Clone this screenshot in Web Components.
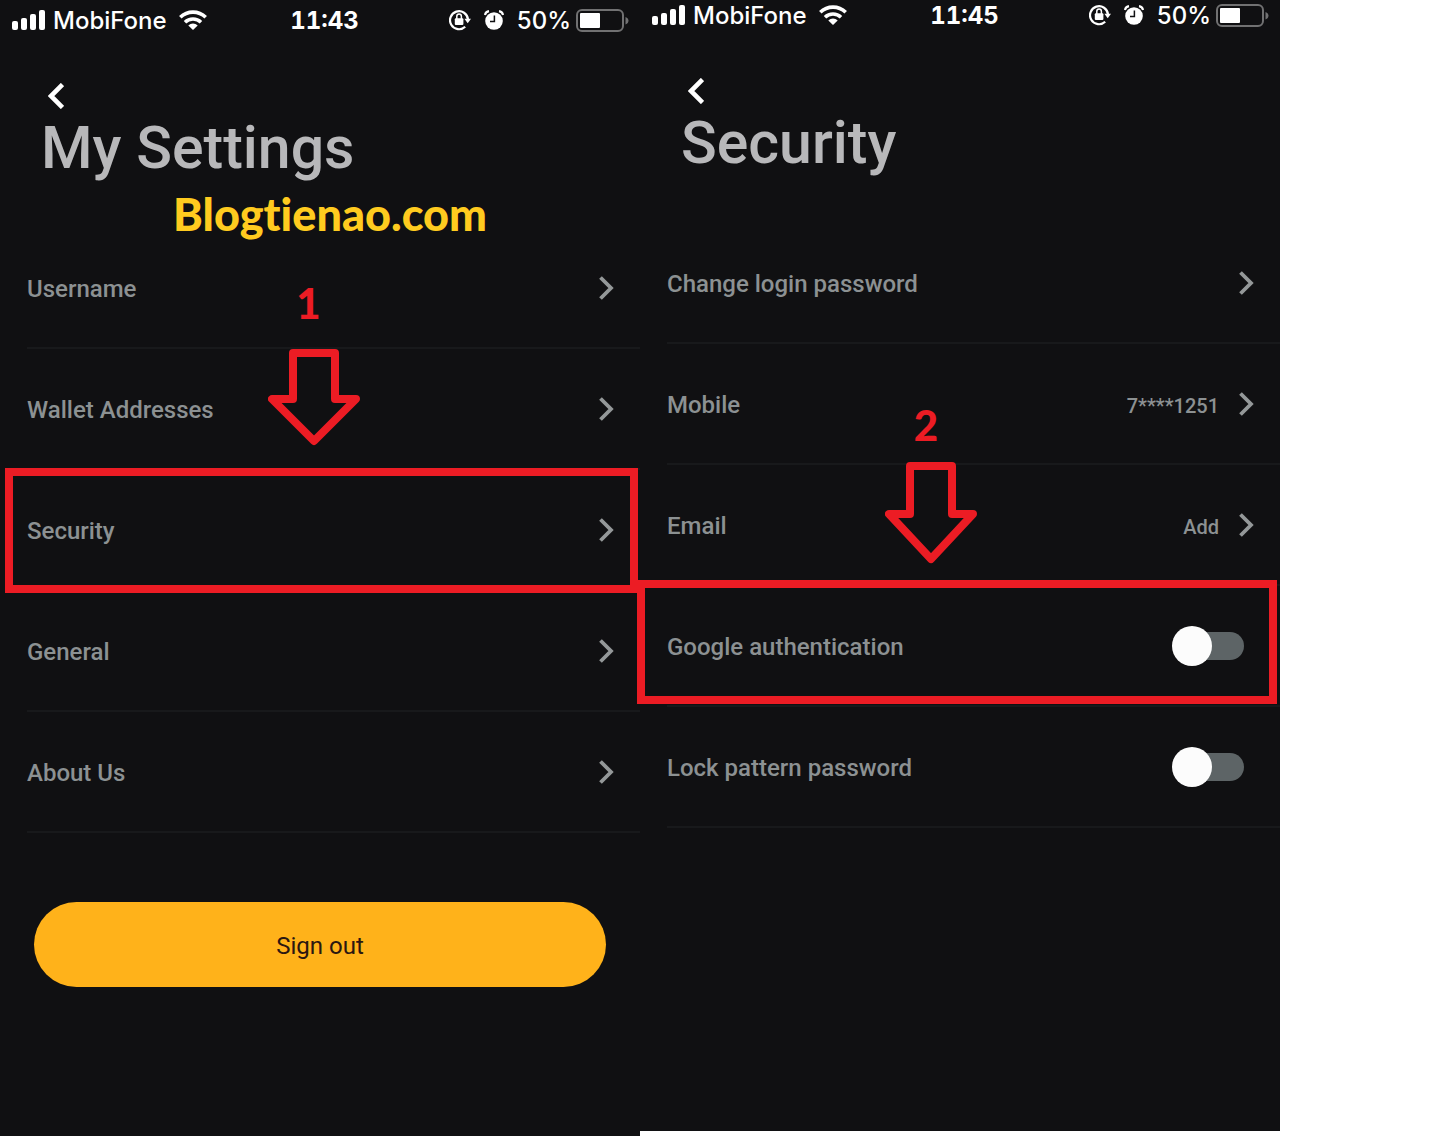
<!DOCTYPE html>
<html lang="en">
<head>
  <meta charset="utf-8">
  <meta name="viewport" content="width=device-width, initial-scale=1">
  <title>My Settings</title>
  <style>
    body {
      background-color: white;
      display: grid;
      font-family: Roboto, "Liberation Sans", sans-serif;
      grid-template-columns: 128fr 128fr 31fr;
      margin: 0;
      min-height: 100vh;
    }

    /* The second phone sits a little higher than the first */
    #security {
      --top-inset: 0px;
      margin-bottom: 5px;
    }

    .watermark {
      color: #ffcb1f;
      font: 900 45px/50px Lato, "Open Sans", sans-serif;
      font-variant-ligatures: none;
      margin: 0;
      padding-left: 20px;
      text-align: center;
    }

    #step-one {
      --frame-inset: -2px 2px -2px 5px;
      --arrow-shift: -8px;
      --arrow-gap: 21px;
      --number-gap: 21px;
    }

    #step-two {
      --frame-inset: -6px 3px 3px -3px;
      --arrow-shift: -26px;
      --arrow-gap: 15px;
      --number-gap: 12px;
    }
  </style>
</head>
<body>
  <phone-screen id="settings" heading="My Settings" time="11:43">
    <p class="watermark" slot="banner">Blogtienao.com</p>
    <setting-row>Username</setting-row>
    <setting-row>Wallet Addresses</setting-row>
    <setting-row>Security
      <step-marker id="step-one" slot="marker" number="1" shaft="50" tip="92"></step-marker>
    </setting-row>
    <setting-row>General</setting-row>
    <setting-row>About Us</setting-row>
    <pill-button>Sign out</pill-button>
  </phone-screen>

  <phone-screen id="security" heading="Security" time="11:45">
    <setting-row>Change login password</setting-row>
    <setting-row value="7****1251">Mobile</setting-row>
    <setting-row value="Add">Email</setting-row>
    <toggle-row>Google authentication
      <step-marker id="step-two" slot="marker" number="2" shaft="52" tip="97"></step-marker>
    </toggle-row>
    <toggle-row>Lock pattern password</toggle-row>
  </phone-screen>

  <script>
    // Attaches an open shadow root and fills it with the given markup
    function render(element, markup) {
      element.attachShadow({ mode: 'open' }).innerHTML = markup;
    }

    class StatusBar extends HTMLElement {
      connectedCallback() {
        render(this, `
          <style>
            :host {
              align-items: center;
              box-sizing: border-box;
              color: white;
              display: grid;
              font: 500 24px/28px Inter, "Liberation Sans", sans-serif;
              grid-template-columns: 1fr auto 1fr;
              height: 30px;
              padding: 0 11px 0 12px;
            }

            div {
              align-items: center;
              display: flex;
            }

            svg {
              display: block;
              flex: none;
            }

            span,
            time { padding-top: 2px; }

            .carrier { gap: 8px; }
            .wifi { margin-left: 4px; }

            time {
              font-variant-numeric: tabular-nums;
              font-weight: 700;
              margin-left: 8px;
            }

            .system {
              gap: 13px;
              justify-content: flex-end;
            }

            .power { gap: 5px; }
          </style>
          <div class="carrier">
            <svg width="33" height="20" viewBox="0 0 33 20" fill="white" aria-hidden="true">
              <rect x="0" y="11" width="6" height="9" rx="2"/>
              <rect x="9" y="8" width="6" height="12" rx="2"/>
              <rect x="18" y="4" width="6" height="16" rx="2"/>
              <rect x="27" y="0" width="6" height="20" rx="2"/>
            </svg>
            <span>MobiFone</span>
            <svg class="wifi" width="28" height="20" viewBox="0 0 28 20" aria-hidden="true">
              <g fill="none" stroke="white" stroke-width="3.6">
                <path d="M1.3 7.2a18.4 18.4 0 0 1 25.4 0"/>
                <path d="M6 12.2a11.6 11.6 0 0 1 16 0"/>
              </g>
              <path d="M9.3 15.4a7 7 0 0 1 9.4 0L14 20z" fill="white"/>
            </svg>
          </div>
          <time>${this.getAttribute('time')}</time>
          <div class="system">
            <svg width="22" height="22" viewBox="0 0 22 22" aria-hidden="true">
              <path d="M16.2 17.8A9 9 0 1 1 19 10.5" fill="none" stroke="white" stroke-width="2.2"/>
              <path d="M15.4 9.8h6.6l-3.3 4.4z" fill="white"/>
              <rect x="5.8" y="9.3" width="8.6" height="6.7" rx="1" fill="white"/>
              <path d="M7.8 10V7.4a2.3 2.3 0 0 1 4.6 0V10" fill="none" stroke="white" stroke-width="1.5"/>
            </svg>
            <svg width="20" height="20" viewBox="0 0 20 20" aria-hidden="true">
              <circle cx="10" cy="11" r="8.8" fill="white"/>
              <path d="M.9 5A5 5 0 0 1 5 1.2M19.1 5A5 5 0 0 0 15 1.2" fill="none" stroke="white" stroke-width="2.2"/>
              <path d="M10.4 5.5v6H6" fill="none" stroke="#101012" stroke-width="1.5"/>
            </svg>
            <div class="power">
              <span>50%</span>
              <svg width="53" height="24" viewBox="0 0 53 24" aria-hidden="true">
                <rect x="1" y="2" width="46" height="21" rx="5" fill="none" stroke="#717172" stroke-width="2"/>
                <rect x="4" y="5" width="20" height="15" rx="1" fill="white"/>
                <path d="M49.5 9c4 1.5 4 6 0 7.5z" fill="#717172"/>
              </svg>
            </div>
          </div>
        `);
      }
    }

    class PhoneScreen extends HTMLElement {
      connectedCallback() {
        render(this, `
          <style>
            :host {
              background-color: #101012;
              box-sizing: border-box;
              display: block;
              min-width: 0;
              padding-top: var(--top-inset, 5px);
            }

            header {
              box-sizing: border-box;
              height: 193px;
              padding-top: 44px;
            }

            button {
              background: none;
              border: none;
              cursor: pointer;
              display: block;
              margin-left: 44px;
              padding: 4px;
            }

            button svg { display: block; }

            h1 {
              color: #b8b8ba;
              font-size: 59px;
              font-weight: 500;
              line-height: 70px;
              margin: 0 0 6px 41px;
            }
          </style>
          <status-bar time="${this.getAttribute('time')}"></status-bar>
          <header>
            <button type="button" aria-label="Back">
              <svg width="16" height="26" viewBox="0 0 16 26">
                <path d="M14.5 1.5L3 13l11.5 11.5" fill="none" stroke="white" stroke-width="4.6"/>
              </svg>
            </button>
            <h1>${this.getAttribute('heading')}</h1>
            <slot name="banner"></slot>
          </header>
          <main><slot></slot></main>
        `);
      }
    }

    // Shared by the link rows and the toggle rows
    const rowStyles = `
      :host {
        display: block;
        position: relative;
      }

      .row {
        align-items: center;
        border-bottom: 2px solid #18191b;
        box-sizing: border-box;
        color: #8c9192;
        cursor: pointer;
        display: flex;
        font-size: 24px;
        font-weight: 500;
        height: 121px;
        line-height: 32px;
        margin-left: 27px;
        padding-right: 26px;
        text-decoration: none;
      }

      .label {
        flex: 1;
        padding-top: 2px;
      }
    `;

    class SettingRow extends HTMLElement {
      connectedCallback() {
        const value = this.getAttribute('value');
        render(this, `
          <style>
            ${rowStyles}
            .value {
              font-size: 20px;
              margin-right: 19px;
              padding-top: 4px;
            }
          </style>
          <a class="row" href="#">
            <span class="label"><slot></slot></span>
            ${value ? `<span class="value">${value}</span>` : ''}
            <svg width="16" height="24" viewBox="0 0 16 24" aria-hidden="true">
              <path d="M2.5 1.5L13 12L2.5 22.5" fill="none" stroke="#949899" stroke-width="3.8"/>
            </svg>
          </a>
          <slot name="marker"></slot>
        `);
      }
    }

    class ToggleRow extends HTMLElement {
      connectedCallback() {
        render(this, `
          <style>
            ${rowStyles}
            .row { padding-right: 36px; }

            /* ::before is the track, ::after the knob that lies over it */
            input {
              align-items: center;
              appearance: none;
              cursor: pointer;
              display: grid;
              height: 40px;
              margin: 0;
              width: 72px;
            }

            input::before,
            input::after {
              content: '';
              grid-area: 1 / 1;
            }

            input::before {
              background-color: #5d6466;
              border-radius: 14px;
              height: 28px;
              margin-left: 8px;
            }

            input::after {
              background-color: #fcfcfc;
              border-radius: 50%;
              height: 40px;
              width: 40px;
            }

            input:checked::after { justify-self: end; }
          </style>
          <label class="row">
            <span class="label"><slot></slot></span>
            <input type="checkbox" role="switch">
          </label>
          <slot name="marker"></slot>
        `);
      }
    }

    // Red frame round a row, with a numbered arrow that points down at it
    class StepMarker extends HTMLElement {
      connectedCallback() {
        const shaft = Number(this.getAttribute('shaft'));
        const tip = Number(this.getAttribute('tip'));
        render(this, `
          <style>
            :host {
              border: 8px solid #ec1c24;
              inset: var(--frame-inset);
              pointer-events: none;
              position: absolute;
              z-index: 1;
            }

            .callout {
              align-items: center;
              bottom: calc(100% + 8px + var(--arrow-gap));
              color: #ec1c24;
              display: flex;
              flex-direction: column;
              font: 900 42px/50px Lato, "Open Sans", sans-serif;
              gap: var(--number-gap);
              left: calc(50% + var(--arrow-shift));
              margin-left: -46px;
              position: absolute;
              width: 92px;
            }

            span { padding-right: 10px; }
            svg { display: block; }
          </style>
          <div class="callout">
            <span>${this.getAttribute('number')}</span>
            <svg width="92" height="${tip + 6}" aria-hidden="true">
              <path d="M25 4H67V${shaft}H88L46 ${tip}L4 ${shaft}H25Z" fill="none"
                stroke="#ec1c24" stroke-width="8" stroke-linejoin="round"/>
            </svg>
          </div>
        `);
      }
    }

    class PillButton extends HTMLElement {
      connectedCallback() {
        render(this, `
          <style>
            :host {
              display: block;
              padding: 69px 34px 0;
            }

            button {
              background-color: #ffb21a;
              border: none;
              border-radius: 43px;
              color: #2b1711;
              cursor: pointer;
              font: 24px/32px Roboto, "Liberation Sans", sans-serif;
              height: 85px;
              padding: 2px 0 0;
              width: 100%;
            }
          </style>
          <button type="button"><slot></slot></button>
        `);
      }
    }

    customElements.define('status-bar', StatusBar);
    customElements.define('phone-screen', PhoneScreen);
    customElements.define('setting-row', SettingRow);
    customElements.define('toggle-row', ToggleRow);
    customElements.define('step-marker', StepMarker);
    customElements.define('pill-button', PillButton);
  </script>
</body>
</html>
